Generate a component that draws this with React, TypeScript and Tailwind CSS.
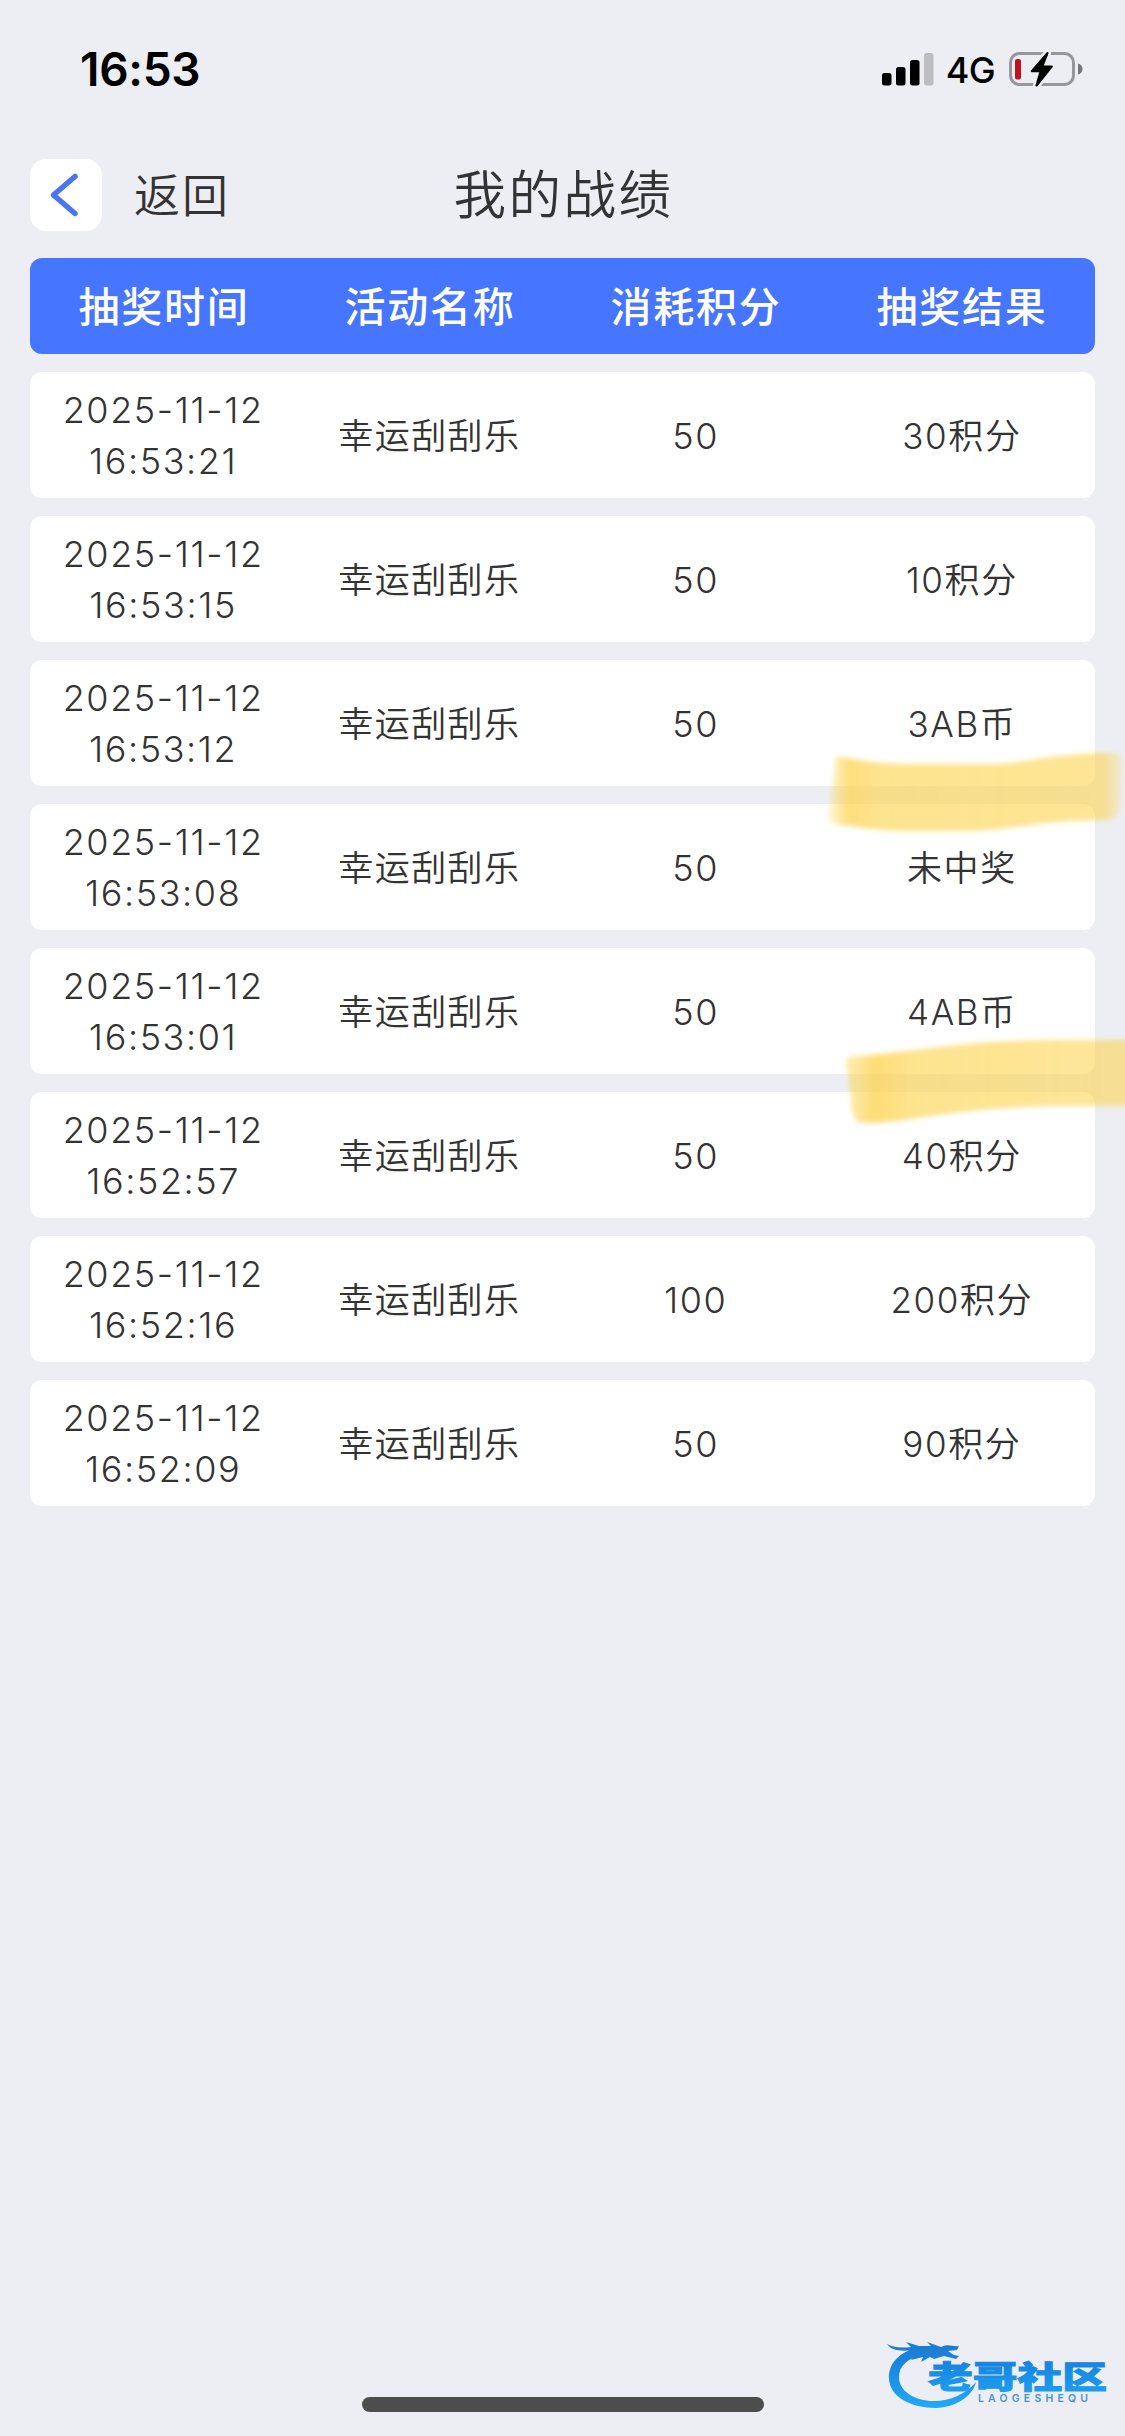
type DrawRecord = {
  date: string;
  time: string;
  activity: string;
  cost: number;
  result: string;
};

const columns = ["抽奖时间", "活动名称", "消耗积分", "抽奖结果"];

const records: DrawRecord[] = [
  { date: "2025-11-12", time: "16:53:21", activity: "幸运刮刮乐", cost: 50, result: "30积分" },
  { date: "2025-11-12", time: "16:53:15", activity: "幸运刮刮乐", cost: 50, result: "10积分" },
  { date: "2025-11-12", time: "16:53:12", activity: "幸运刮刮乐", cost: 50, result: "3AB币" },
  { date: "2025-11-12", time: "16:53:08", activity: "幸运刮刮乐", cost: 50, result: "未中奖" },
  { date: "2025-11-12", time: "16:53:01", activity: "幸运刮刮乐", cost: 50, result: "4AB币" },
  { date: "2025-11-12", time: "16:52:57", activity: "幸运刮刮乐", cost: 50, result: "40积分" },
  { date: "2025-11-12", time: "16:52:16", activity: "幸运刮刮乐", cost: 100, result: "200积分" },
  { date: "2025-11-12", time: "16:52:09", activity: "幸运刮刮乐", cost: 50, result: "90积分" },
];

function StatusBar() {
  return (
    <div className="flex h-[138px] items-center justify-between pl-20 pr-[42px] text-black">
      <span className="text-[46px] leading-none font-semibold tracking-[-0.3px]">16:53</span>
      <div className="flex items-center">
        <svg className="h-[34px] w-[52px]" viewBox="0 0 52 34">
          <rect x="0" y="21" width="9.5" height="12.5" rx="2.5" />
          <rect x="14" y="15" width="9.5" height="18.5" rx="2.5" />
          <rect x="28" y="8" width="9.5" height="25.5" rx="2.5" />
          <rect x="42" y="1" width="9.5" height="32.5" rx="2.5" fill="#bdbdc1" />
        </svg>
        <span className="ml-3 pt-0.5 text-[36px] leading-none font-[450] tracking-[-0.7px]">4G</span>
        <svg className="ml-[13px] h-9 w-[75px]" viewBox="0 0 75 36">
          <rect x="2.5" y="2.5" width="63" height="31" rx="9" fill="none" stroke="#97979b" strokeWidth="3" />
          <path d="M70 12.500c3 .8 4.500 3 4.500 5.500s-1.500 4.700-4.500 5.500z" fill="#77777a" />
          <rect x="7" y="8" width="6" height="20.500" rx="2" fill="#c1121f" />
          <path
            d="M38.500 1.500 23 19.500c-.7.900-.3 1.700.7 1.700h7.500l-3.700 12.700c-.4 1.600 1.200 2.200 2.200 1l14.800-18.600c.7-.9.3-1.700-.7-1.700h-8l4.600-11.800c.6-1.600-.8-2.500-1.900-1.300z"
            stroke="#edeef3"
            strokeWidth="5"
            paintOrder="stroke"
          />
        </svg>
      </div>
    </div>
  );
}

function PageHeader() {
  return (
    <header className="mb-1.5 grid h-[114px] grid-cols-3 items-center px-[30px] text-[#333]">
      <div className="flex items-center gap-8">
        <button className="flex size-[72px] items-center justify-center rounded-2xl bg-white">
          <svg className="mr-1 h-[46px] w-[30px]" viewBox="0 0 30 46">
            <path
              d="M26 4.500 4.500 23 26 41.500"
              fill="none"
              stroke="#4a75f0"
              strokeWidth="5.500"
              strokeLinecap="round"
              strokeLinejoin="round"
            />
          </svg>
        </button>
        <span className="text-[46px] leading-none font-[350] tracking-[2px]">返回</span>
      </div>
      <h1 className="pl-0.5 text-center text-[52.500px] leading-none font-[350] tracking-[2.500px] whitespace-nowrap">
        我的战绩
      </h1>
    </header>
  );
}

function Highlights() {
  return (
    <svg
      className="pointer-events-none absolute top-[740px] left-[815px] h-[400px] w-[310px]"
      viewBox="815 740 310 400"
    >
      <defs>
        <linearGradient id="marker-a" x1="828" x2="1124" y1="0" y2="0" gradientUnits="userSpaceOnUse">
          <stop offset="0" stopColor="#fcd34a" stopOpacity=".2" />
          <stop offset=".07" stopColor="#fcd34a" stopOpacity=".72" />
          <stop offset=".18" stopColor="#fcd34a" stopOpacity=".62" />
          <stop offset=".93" stopColor="#fcd34a" stopOpacity=".58" />
          <stop offset="1" stopColor="#fcd34a" stopOpacity=".12" />
        </linearGradient>
        <linearGradient id="marker-b" x1="844" x2="1125" y1="0" y2="0" gradientUnits="userSpaceOnUse">
          <stop offset="0" stopColor="#fcd34a" stopOpacity=".4" />
          <stop offset=".11" stopColor="#fcd34a" stopOpacity=".76" />
          <stop offset=".25" stopColor="#fcd34a" stopOpacity=".62" />
          <stop offset="1" stopColor="#fcd34a" stopOpacity=".56" />
        </linearGradient>
        <filter id="marker-soft">
          <feGaussianBlur stdDeviation="2.5" />
        </filter>
      </defs>
      <g filter="url(#marker-soft)">
        <path
          d="M836 756 C860 760 878 764 910 764 H990 C1030 763 1050 753 1115 753 Q1125 755 1123 766 L1121 809 Q1119 819 1108 820 C1040 820 1010 831 960 831 H905 C880 831 860 827 834 824 Q828 822 829 810 Z"
          fill="url(#marker-a)"
        />
        <path
          d="M846 1061 Q846 1056 858 1056 C910 1053 960 1040 1060 1040 H1135 V1106 H1060 C1000 1107 960 1112 925 1117 C900 1121 880 1123 863 1123 Q854 1123 852 1110 Z"
          fill="url(#marker-b)"
        />
      </g>
    </svg>
  );
}

function Watermark() {
  return (
    <div className="absolute top-[2336px] left-[886px] h-[76px] w-[225px]">
      <svg className="h-[76px] w-[225px]" viewBox="886 2336 225 76">
        <defs>
          <linearGradient id="brand" x1="0" x2="0" y1="2342" y2="2410" gradientUnits="userSpaceOnUse">
            <stop offset="0" stopColor="#2079cc" />
            <stop offset=".35" stopColor="#1787e2" />
            <stop offset="1" stopColor="#21acf7" />
          </linearGradient>
        </defs>
        <g fill="url(#brand)">
          <path d="M919 2347C899 2352 888 2364 889 2379C890 2397 911 2408 936 2408C956 2407 972 2397 976 2382C966 2394 950 2401 934 2401C914 2401 899 2391 899 2377C899 2366 908 2358 921 2356Z" />
          <path d="M887 2344C895 2348 902 2348 911 2347L906 2342L919 2346L931 2346L927 2342L941 2347C948 2343 953 2347 959 2346L957 2350L948 2351L954 2355L959 2356L956 2359L944 2356L934 2359L930 2357L921 2362L923 2357L911 2360L915 2355L903 2357C907 2352 910 2350 914 2350C905 2351 892 2352 887 2344Z" />
          <text
            x="928"
            y="2388"
            fontSize="31"
            fontWeight="900"
            textLength="179"
            lengthAdjust="spacingAndGlyphs"
            stroke="url(#brand)"
            strokeWidth="1"
          >
            老哥社区
          </text>
        </g>
        <text x="978" y="2402" fontSize="10.500" fontWeight="600" textLength="110" fill="#4793cf">
          LAOGESHEQU
        </text>
      </svg>
    </div>
  );
}

export default function App() {
  return (
    <div className="relative flex h-[2436px] w-[1125px] flex-col overflow-hidden bg-[#edeef3] font-[Inter,'Noto_Sans_CJK_SC',sans-serif]">
      <StatusBar />
      <PageHeader />
      <main className="flex flex-col gap-[18px] px-[30px] text-center">
        <div className="grid h-24 grid-cols-4 items-center rounded-xl bg-[#4676ff] pt-0.5 pl-px text-[41px] leading-none font-medium tracking-[1.800px] text-white">
          {columns.map((column) => (
            <span key={column}>{column}</span>
          ))}
        </div>
        {records.map((record) => (
          <div
            key={record.time}
            className="grid h-[126px] grid-cols-4 items-center rounded-xl bg-white pt-0.5 text-[36px] leading-[51px] font-[365] tracking-[1.600px] text-[#333]"
          >
            <div>
              <p>{record.date}</p>
              <p>{record.time}</p>
            </div>
            <span className="pt-px text-[35px] tracking-[1.400px]">{record.activity}</span>
            <span>{record.cost}</span>
            <span className="pt-px text-[35px] tracking-[1.600px]">{record.result}</span>
          </div>
        ))}
      </main>
      <Highlights />
      <Watermark />
      <div className="mx-auto mt-auto mb-6 h-[15px] w-[402px] rounded-full bg-[#4d4d4d]" />
    </div>
  );
}
